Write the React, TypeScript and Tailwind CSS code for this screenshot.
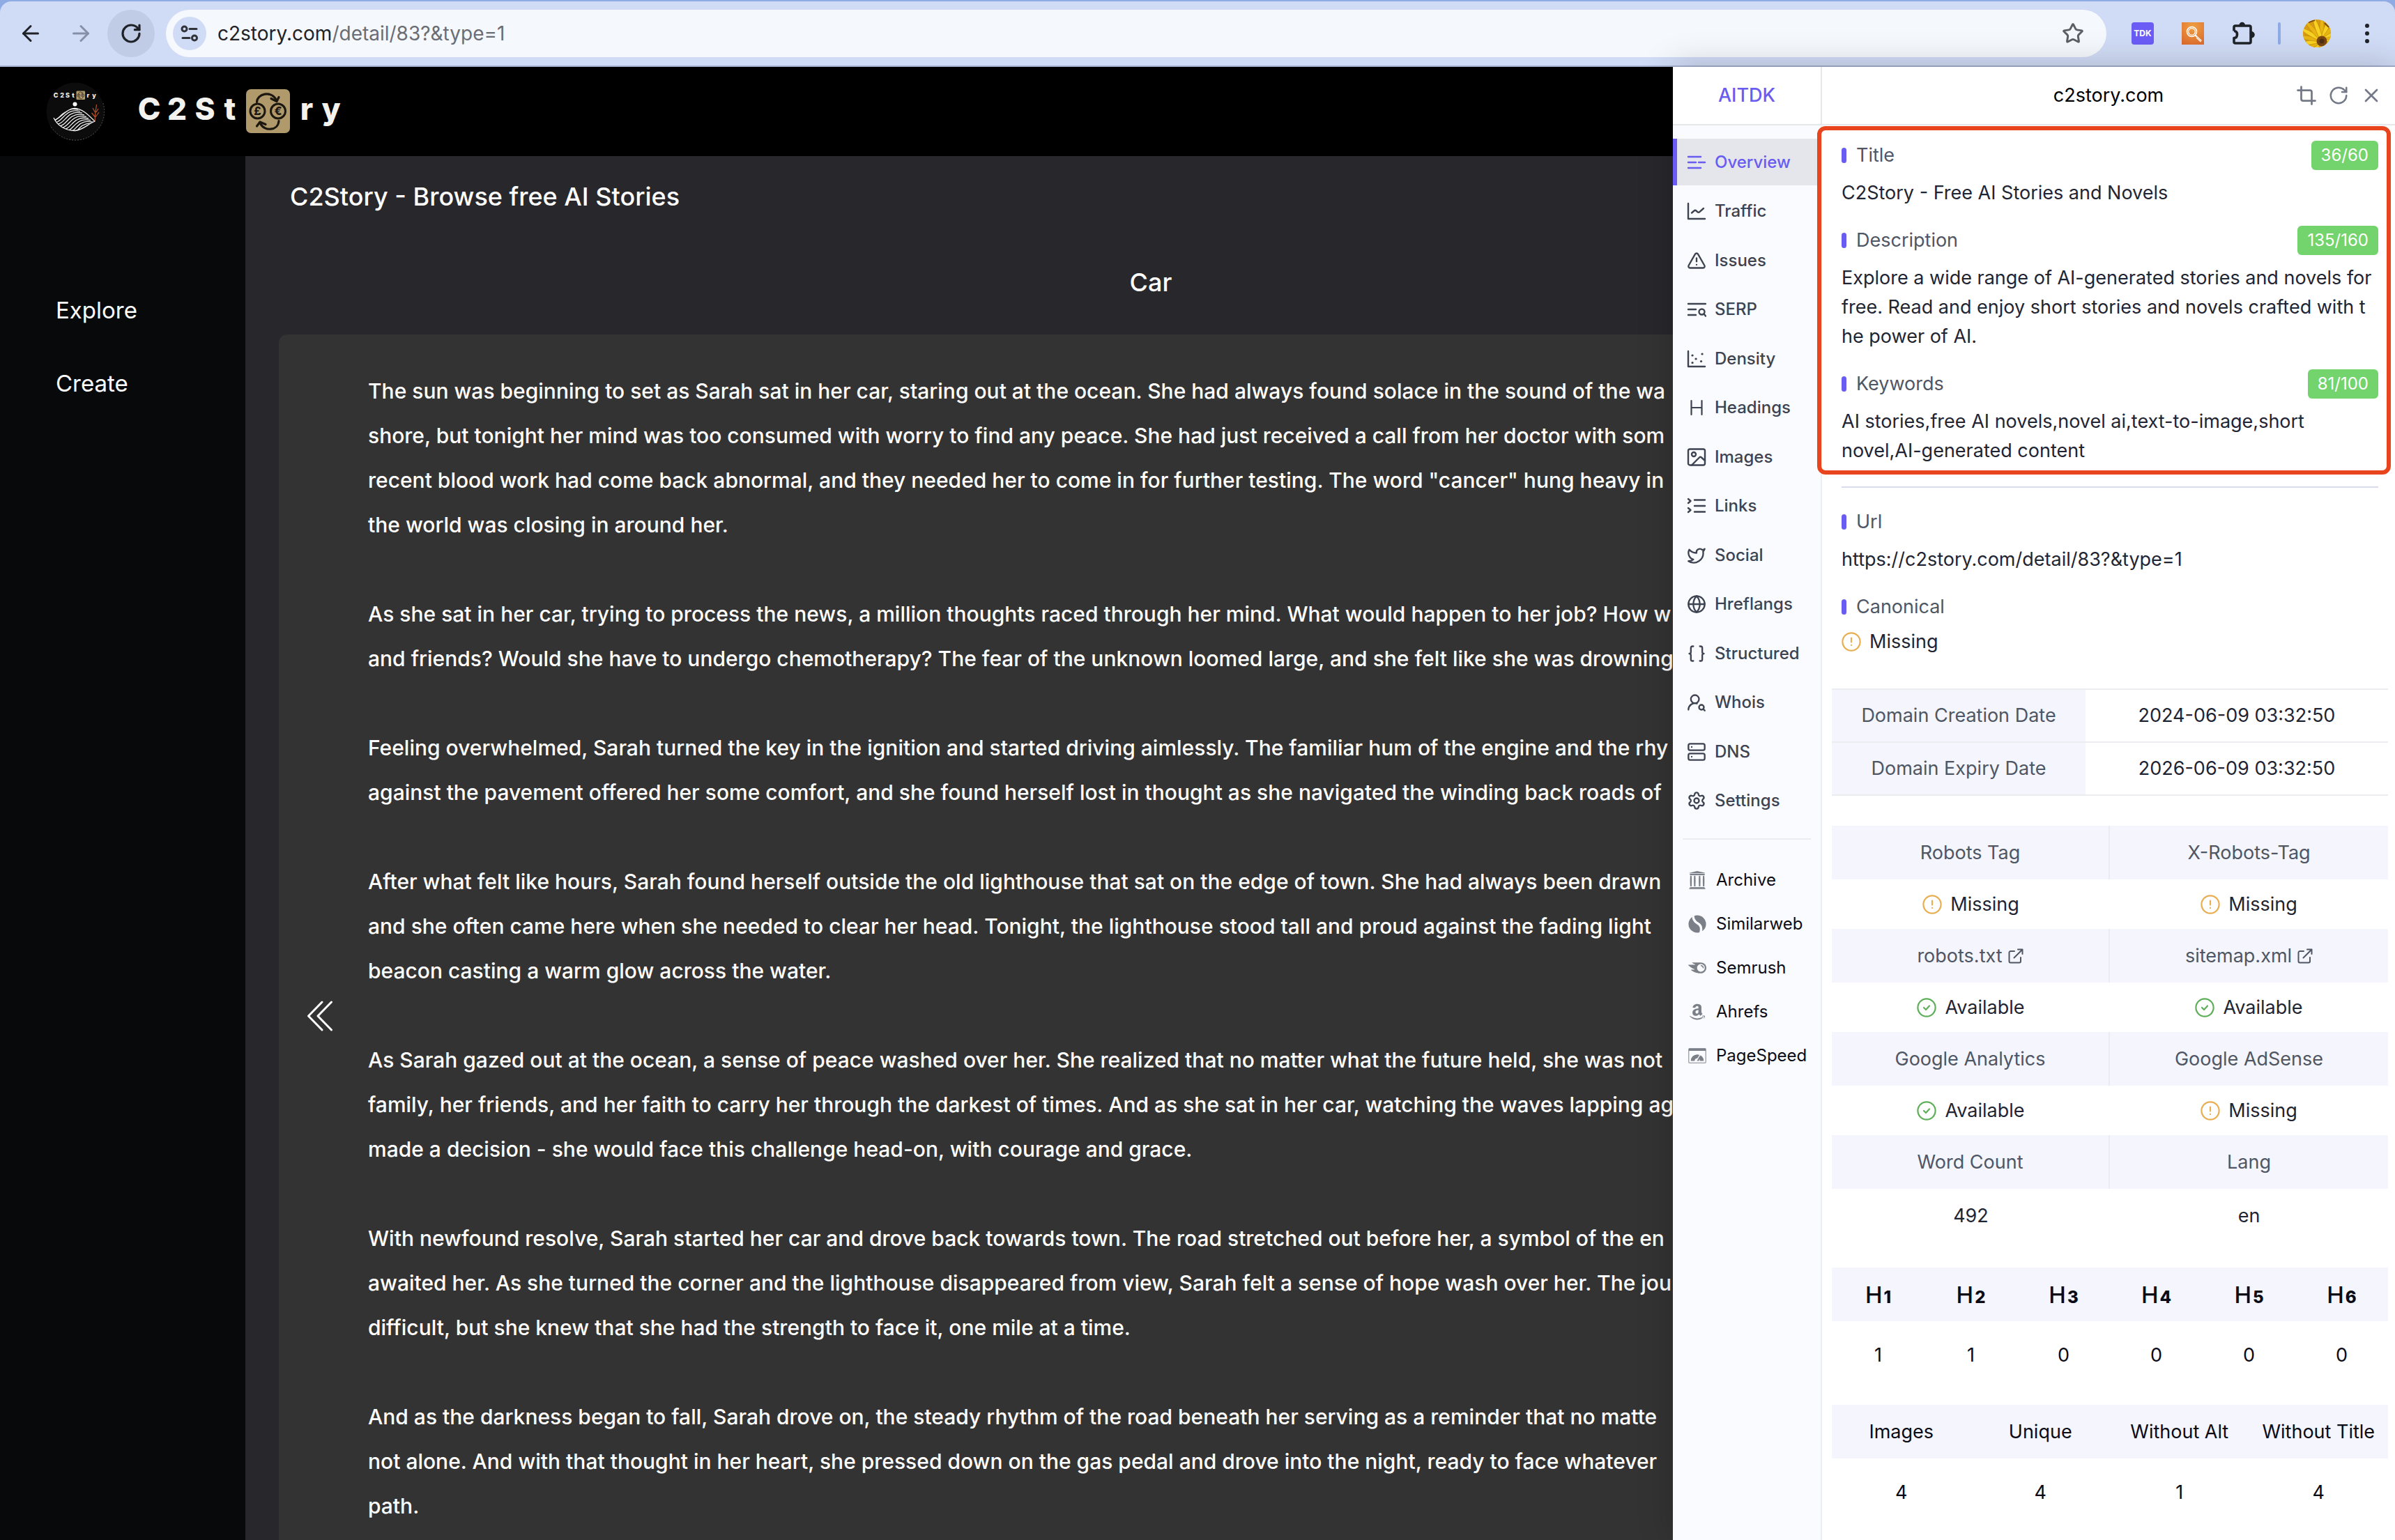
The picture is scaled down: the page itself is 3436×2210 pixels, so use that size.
import React from "react";
import {
  ArrowLeft,
  ArrowRight,
  Braces,
  Crop,
  Globe,
  RotateCw,
  Server,
  Settings,
  Star,
  TriangleAlert,
  Twitter,
  UserRoundSearch,
  X,
} from "lucide-react";
import { FaAmazon } from "react-icons/fa";
import { SiInternetarchive, SiSemrush } from "react-icons/si";

type Kids = { children: React.ReactNode };

/* ---------- icons ---------- */

function LineIcon({ children }: Kids) {
  return (
    <svg viewBox="0 0 28 28" className="size-7" fill="none" stroke="currentColor" strokeWidth="2.4" strokeLinecap="round" strokeLinejoin="round" aria-hidden="true">
      {children}
    </svg>
  );
}

const OverviewIcon = () => (
  <LineIcon>
    <path d="M2 6h18M2 14h11M17 14h9M2 22h18" />
  </LineIcon>
);
const TrafficIcon = () => (
  <LineIcon>
    <path d="M2 3v22h24" />
    <path d="M7 16.5l3.5-3c1-.9 2-.9 3 0l1.8 1.6c1 .9 2 .9 3 0L24 10" />
  </LineIcon>
);
const SerpIcon = () => (
  <LineIcon>
    <path d="M2 6h25M2 14h11M2 22h11" />
    <circle cx="21.5" cy="17.5" r="4" />
    <path d="M24.5 20.5L27 23.5" />
  </LineIcon>
);
const DensityIcon = () => (
  <LineIcon>
    <path d="M2 3v22h24" />
    <path d="M8 9h.1M13 14h.1M8 19.500h.1M20.500 17.500h.1M22 7h.1" strokeWidth="3.2" />
  </LineIcon>
);
const HeadingsIcon = () => (
  <LineIcon>
    <path d="M6.500 4v20M21.500 4v20M6.500 14h15" strokeWidth="2.2" />
  </LineIcon>
);
const ImagesIcon = () => (
  <LineIcon>
    <rect x="2" y="2.500" width="24" height="23" rx="2.500" />
    <circle cx="10" cy="10" r="3" />
    <path d="M7 25.500L18 14.500c1-1 2-1 3 0l5 4.500" />
  </LineIcon>
);
const LinksIcon = () => (
  <LineIcon>
    <path d="M11 5.500h15M11 14h15M11 22.500h15" />
    <path d="M2 4l3.500 3L2 10M2 17l3.500 3L2 23" />
  </LineIcon>
);
const SimilarwebIcon = () => (
  <svg viewBox="0 0 28 28" className="size-6.5" aria-hidden="true">
    <circle cx="14" cy="14" r="13.500" fill="#7b8088" />
    <path d="M7.500 -1C7 7 10 10.500 14.500 13S22 20 18.500 29" fill="none" stroke="#fafbff" strokeWidth="3.600" />
  </svg>
);
const PageSpeedIcon = () => (
  <svg viewBox="0 0 28 28" className="size-6.5" fill="none" aria-hidden="true">
    <rect x=".8" y="2.800" width="26.400" height="22.400" rx="1.500" stroke="#9a9ea6" strokeWidth="1.400" />
    <path d="M1 3h26v3.500H1z" fill="#7b8088" />
    <path d="M4 22a10 10 0 0 1 20 0h-6a4 4 0 0 0-8 0z" fill="#7b8088" />
    <path d="M12.500 22L18.500 12.500" stroke="#fafbff" strokeWidth="1.600" />
    <path d="M13.500 22L18.500 13.500 16.500 22z" fill="#7b8088" />
  </svg>
);
const WarnIcon = () => (
  <svg viewBox="0 0 28 28" className="size-7 text-[#e7ae52]" fill="none" stroke="currentColor" strokeWidth="2.200" strokeLinecap="round" aria-hidden="true">
    <circle cx="14" cy="14" r="12.600" />
    <path d="M14 8.500v6M14 18.800v.1" />
  </svg>
);
const OkIcon = () => (
  <svg viewBox="0 0 28 28" className="size-7 text-[#5fae5a]" fill="none" stroke="currentColor" strokeWidth="2.200" strokeLinecap="round" strokeLinejoin="round" aria-hidden="true">
    <circle cx="14" cy="14" r="12.600" />
    <path d="M10 14l3 3 5-5.500" />
  </svg>
);
const ExternalIcon = () => (
  <svg viewBox="0 0 22 22" className="size-[22px]" fill="none" stroke="currentColor" strokeWidth="2" strokeLinecap="round" strokeLinejoin="round" aria-hidden="true">
    <path d="M9 4H3.500A2 2 0 0 0 1.500 6v12.500a2 2 0 0 0 2 2H16a2 2 0 0 0 2-2V13" />
    <path d="M14 1.500h6.500V8M20.500 1.500L8.500 13.500" />
  </svg>
);
const TuneIcon = () => (
  <svg viewBox="0 0 26 26" className="size-[26px]" fill="none" stroke="#30343a" strokeWidth="3" aria-hidden="true">
    <circle cx="5.500" cy="6.500" r="3.500" />
    <path d="M13 6.500h10M3 19.500h10" strokeLinecap="round" />
    <circle cx="20" cy="19.500" r="3.500" />
  </svg>
);
const PuzzleIcon = () => (
  <svg viewBox="0 0 34 34" className="size-[34px]" fill="none" stroke="#1f2328" strokeWidth="3.600" strokeLinejoin="round" aria-hidden="true">
    <path d="M3 13V8a2 2 0 0 1 2-2h20a2 2 0 0 1 2 2v21a2 2 0 0 1-2 2H5a2 2 0 0 1-2-2v-5c3.500-.3 5-2.600 5-5.500S6.500 13.300 3 13z" stroke="none" />
    <path d="M3 13.500V8a2 2 0 0 1 2-2h20a2 2 0 0 1 2 2v21a2 2 0 0 1-2 2H5a2 2 0 0 1-2-2v-5.500c3 0 4.500-2 4.500-5s-1.500-5-4.500-5" />
    <path d="M10.500 5a4.200 4.200 0 0 1 8.400 0zM28 14a4.800 4.800 0 0 1 0 9.600z" fill="#1f2328" stroke="none" />
  </svg>
);
const PETALS = Array.from({ length: 18 }, (_, i) => i * 20);
const Avatar = () => (
  <svg viewBox="0 0 40 40" className="size-10" aria-hidden="true">
    <defs>
      <clipPath id="avatar-clip">
        <circle cx="20" cy="20" r="20" />
      </clipPath>
    </defs>
    <g clipPath="url(#avatar-clip)">
      <rect width="40" height="40" fill="#d79c12" />
      {PETALS.map((a) => (
        <ellipse key={a} cx="27" cy="13" rx="3" ry="18" fill={a % 40 ? "#f8d222" : "#e9b512"} stroke="#b98309" strokeWidth=".5" transform={`rotate(${a} 27 30)`} />
      ))}
      <path d="M8 4l9-3M31 5l6 6" stroke="#7b4a12" strokeWidth="2" />
      <circle cx="27" cy="31" r="7.500" fill="#7a4613" />
      <circle cx="27" cy="31" r="3.500" fill="#4f2f14" />
    </g>
  </svg>
);
const SearchExtIcon = () => (
  <svg viewBox="0 0 32 32" className="size-8" aria-hidden="true">
    <defs>
      <radialGradient id="search-bg" cx=".5" cy=".2" r=".9">
        <stop offset="0" stopColor="#efa043" />
        <stop offset="1" stopColor="#dc6a2c" />
      </radialGradient>
    </defs>
    <rect width="32" height="32" fill="url(#search-bg)" />
    <g fill="none" stroke="#fff">
      <circle cx="14.500" cy="13.500" r="7" strokeWidth="1.600" />
      <circle cx="14.500" cy="13.500" r="4.800" strokeWidth="1.200" />
      <path d="M19.500 18.500l2.500 2.500" strokeWidth="2" />
      <path d="M22 20.500l6.500 6M21 22l6.500 6" strokeWidth="1.300" />
    </g>
  </svg>
);

const Coins = () => (
  <g>
    <rect width="63" height="63" rx="7" fill="#b09a6c" />
    <g fill="none" stroke="#1c1810" strokeWidth="3">
      <circle cx="16.500" cy="31.500" r="10.500" />
      <circle cx="46" cy="31.500" r="10.500" />
      <path d="M15.500 18.500C16 6 36 2 43 15" strokeWidth="3.200" strokeLinecap="round" />
      <path d="M36 13.500l8 4 3-6" strokeWidth="3.200" strokeLinecap="round" strokeLinejoin="round" />
      <path d="M47 45.500C46 60 26 61 20.500 49" strokeWidth="3.200" strokeLinecap="round" />
      <path d="M15.500 53l4.500-6 8 3.500" strokeWidth="3.200" strokeLinecap="round" strokeLinejoin="round" />
    </g>
    <g fill="#1c1810" fontFamily="Inter, sans-serif" fontWeight="800" fontSize="16" textAnchor="middle">
      <text x="16.500" y="37">£</text>
      <text x="46" y="37">€</text>
    </g>
  </g>
);

const WORDMARK: [string, number][] = [
  ["C", 16],
  ["2", 56],
  ["S", 96],
  ["t", 132],
  ["r", 242],
  ["y", 277],
];
const Wordmark = () => (
  <svg viewBox="0 0 296 64" className="h-16 w-[296px]" role="img" aria-label="C2Story">
    <g fill="#f3f2ee" fontFamily="Inter, sans-serif" fontWeight="800" fontSize="44" textAnchor="middle">
      {WORDMARK.map(([c, x]) => (
        <text key={c} x={x} y="44">
          {c}
        </text>
      ))}
    </g>
    <g transform="translate(155 0)">
      <Coins />
    </g>
  </svg>
);

const BADGE_LETTERS: [string, number][] = [
  ["C", 14],
  ["2", 23],
  ["S", 31],
  ["t", 39],
  ["r", 60.5],
  ["y", 69],
];
const RIDGES = [0, 1, 2, 3, 4, 5, 6, 7, 8, 9];
const Emblem = () => (
  <svg viewBox="0 0 84 84" className="size-[84px]" aria-hidden="true">
    <defs>
      <clipPath id="hill">
        <path d="M11 51C16 62 28 70 42 69.500C54 68 60 60 70 56C60 46 52 38 41 37.500C30 38 22 48 11 51z" />
      </clipPath>
    </defs>
    <circle cx="42" cy="42" r="41.500" fill="#0c0c0c" />
    <path d="M82 30A41.500 41.500 0 0 1 6 62" fill="none" stroke="#6b6b6b" strokeWidth=".8" strokeDasharray="2 2" />
    <g fill="#f3f2ee" fontFamily="Inter, sans-serif" fontWeight="800" fontSize="9" textAnchor="middle">
      {BADGE_LETTERS.map(([c, x]) => (
        <text key={c} x={x} y="21.500">
          {c}
        </text>
      ))}
    </g>
    <g transform="translate(43.500 12.500) scale(.2)">
      <Coins />
    </g>
    <circle cx="41.500" cy="31.500" r="3" fill="#fff" />
    <g clipPath="url(#hill)" fill="none" stroke="#f0f0f0" strokeWidth="1.300">
      {RIDGES.map((i) => (
        <path key={i} d={`M${2 + i * 3} ${56 + i * 2.6}c12 1 16-5 22-11s12-8 22-6`} />
      ))}
    </g>
    <path d="M11 51C16 62 28 70 42 69.500C54 68 60 60 70 56C60 46 52 38 41 37.500C30 38 24 49 13 54" fill="none" stroke="#f0f0f0" strokeWidth="1.300" />
    <g fill="none" stroke="#b5532b" strokeWidth="1.200">
      <path d="M70.500 56c-1-8 1-14 2-24M70.500 50l-5-6M71 44l-4-7M71 50l5-7M72 43l3-5" />
    </g>
  </svg>
);

/* ---------- data ---------- */

const NAV: [string, React.ReactNode][] = [
  ["Overview", <OverviewIcon />],
  ["Traffic", <TrafficIcon />],
  ["Issues", <TriangleAlert className="size-7" strokeWidth={2} />],
  ["SERP", <SerpIcon />],
  ["Density", <DensityIcon />],
  ["Headings", <HeadingsIcon />],
  ["Images", <ImagesIcon />],
  ["Links", <LinksIcon />],
  ["Social", <Twitter className="size-7" strokeWidth={2} />],
  ["Hreflangs", <Globe className="size-7" strokeWidth={2} />],
  ["Structured", <Braces className="size-7" strokeWidth={2} />],
  ["Whois", <UserRoundSearch className="size-7" strokeWidth={2} />],
  ["DNS", <Server className="size-7" strokeWidth={2} />],
  ["Settings", <Settings className="size-7" strokeWidth={2} />],
];

const TOOLS: [string, React.ReactNode][] = [
  ["Archive", <SiInternetarchive className="size-6.5" />],
  ["Similarweb", <SimilarwebIcon />],
  ["Semrush", <SiSemrush className="size-6.5" />],
  ["Ahrefs", <FaAmazon className="size-6.5" />],
  ["PageSpeed", <PageSpeedIcon />],
];

const STORY: string[][] = [
  [
    "The sun was beginning to set as Sarah sat in her car, staring out at the ocean. She had always found solace in the sound of the wa",
    "shore, but tonight her mind was too consumed with worry to find any peace. She had just received a call from her doctor with som",
    "recent blood work had come back abnormal, and they needed her to come in for further testing. The word \"cancer\" hung heavy in",
    "the world was closing in around her.",
  ],
  [
    "As she sat in her car, trying to process the news, a million thoughts raced through her mind. What would happen to her job? How w",
    "and friends? Would she have to undergo chemotherapy? The fear of the unknown loomed large, and she felt like she was drowning",
  ],
  [
    "Feeling overwhelmed, Sarah turned the key in the ignition and started driving aimlessly. The familiar hum of the engine and the rhy",
    "against the pavement offered her some comfort, and she found herself lost in thought as she navigated the winding back roads of",
  ],
  [
    "After what felt like hours, Sarah found herself outside the old lighthouse that sat on the edge of town. She had always been drawn",
    "and she often came here when she needed to clear her head. Tonight, the lighthouse stood tall and proud against the fading light",
    "beacon casting a warm glow across the water.",
  ],
  [
    "As Sarah gazed out at the ocean, a sense of peace washed over her. She realized that no matter what the future held, she was not",
    "family, her friends, and her faith to carry her through the darkest of times. And as she sat in her car, watching the waves lapping ag",
    "made a decision - she would face this challenge head-on, with courage and grace.",
  ],
  [
    "With newfound resolve, Sarah started her car and drove back towards town. The road stretched out before her, a symbol of the en",
    "awaited her. As she turned the corner and the lighthouse disappeared from view, Sarah felt a sense of hope wash over her. The jou",
    "difficult, but she knew that she had the strength to face it, one mile at a time.",
  ],
  [
    "And as the darkness began to fall, Sarah drove on, the steady rhythm of the road beneath her serving as a reminder that no matte",
    "not alone. And with that thought in her heart, she pressed down on the gas pedal and drove into the night, ready to face whatever",
    "path.",
  ],
];

/* ---------- panel pieces ---------- */

function Field({ label, count, children }: Kids & { label: string; count?: string }) {
  return (
    <section>
      <div className="flex h-[42px] items-center justify-between">
        <h3 className="flex items-center gap-3.5 text-[#4f5664]">
          <span className="h-5.5 w-[7px] rounded-full bg-[#6a5cf0]" />
          {label}
        </h3>
        {count && <span className="flex h-[42px] items-center rounded-md bg-[#73d46d] px-3.5 text-2xl text-white">{count}</span>}
      </div>
      {children}
    </section>
  );
}

function Status({ ok }: { ok: boolean }) {
  return (
    <span className="inline-flex items-center gap-3 align-middle leading-[42px]">
      {ok ? <OkIcon /> : <WarnIcon />}
      {ok ? "Available" : "Missing"}
    </span>
  );
}

function DocLink({ children }: Kids) {
  return (
    <a href="#" className="inline-flex items-center gap-2 align-middle">
      {children}
      <ExternalIcon />
    </a>
  );
}

const CHECKS: [React.ReactNode, React.ReactNode, React.ReactNode, React.ReactNode][] = [
  ["Robots Tag", "X-Robots-Tag", <Status ok={false} />, <Status ok={false} />],
  [<DocLink>robots.txt</DocLink>, <DocLink>sitemap.xml</DocLink>, <Status ok />, <Status ok />],
  ["Google Analytics", "Google AdSense", <Status ok />, <Status ok={false} />],
  ["Word Count", "Lang", "492", "en"],
];

function Chrome() {
  return (
    <div className="shrink-0 bg-[#8fabe4] pt-0.5">
      <div className="flex h-[94px] items-center rounded-t-2xl border-b-2 border-[#a3afcd] bg-[#d0dbf5] pr-5 pl-2.5 text-[#1f2328]">
        <div className="flex items-center gap-1">
          <button aria-label="Back" className="flex size-[68px] items-center justify-center rounded-full">
            <ArrowLeft className="size-9" strokeWidth={2} />
          </button>
          <button aria-label="Forward" className="flex size-[68px] items-center justify-center rounded-full text-[#8590a8]">
            <ArrowRight className="size-9" strokeWidth={2} />
          </button>
          <button aria-label="Reload" className="flex size-[68px] items-center justify-center rounded-full bg-[#c0cbe5]">
            <RotateCw className="size-8" strokeWidth={2.4} />
          </button>
        </div>
        <div className="ml-4 flex h-[68px] flex-1 items-center rounded-full bg-[#f5f8fd] pr-8 pl-2.5">
          <button aria-label="Site information" className="flex size-12 items-center justify-center rounded-full bg-[#d0dbf5]">
            <TuneIcon />
          </button>
          <div role="textbox" aria-label="Address" contentEditable suppressContentEditableWarning className="ml-4 flex-1 text-[28px] text-[#6a6e74] outline-none">
            <span className="text-[#1f2328]">c2story.com</span>/detail/83?&amp;type=1
          </div>
          <button aria-label="Bookmark" className="text-[#5b5f66]">
            <Star className="size-8" strokeWidth={2.2} strokeLinejoin="miter" />
          </button>
        </div>
        <div className="ml-9 flex items-center">
          <button className="size-8 rounded-sm bg-[#6a5cf5] text-xs font-bold text-white">TDK</button>
          <button aria-label="Search extension" className="ml-10">
            <SearchExtIcon />
          </button>
          <button aria-label="Extensions" className="ml-10">
            <PuzzleIcon />
          </button>
          <span className="ml-8 h-8 w-1 rounded-full bg-[#8fabe6]" />
          <button aria-label="Profile" className="ml-8">
            <Avatar />
          </button>
          <button aria-label="Menu" className="ml-8 flex w-10 flex-col items-center gap-[5px]">
            <span className="size-1.5 rounded-full bg-[#1f2328]" />
            <span className="size-1.5 rounded-full bg-[#1f2328]" />
            <span className="size-1.5 rounded-full bg-[#1f2328]" />
          </button>
        </div>
      </div>
    </div>
  );
}

function Site() {
  return (
    <div className="flex h-full flex-col bg-[#28272c] text-white">
      <header className="flex h-32 shrink-0 items-center gap-12 bg-black pl-[66px]">
        <Emblem />
        <Wordmark />
      </header>
      <div className="flex min-h-0 flex-1">
        <nav className="flex w-[352px] shrink-0 flex-col gap-[57px] bg-[#08090b] pt-[197px] pl-20 text-[33px] leading-[48px]">
          <a href="#">Explore</a>
          <a href="#">Create</a>
        </nav>
        <main className="min-w-0 flex-1 overflow-hidden pl-12">
          <h1 className="pt-[34px] pl-4 text-4xl leading-[48px] font-medium">C2Story - Browse free AI Stories</h1>
          <h2 className="mt-[75px] w-[2502px] text-center text-4xl leading-[48px] font-medium">Car</h2>
          <div className="relative mt-[51px] w-[2960px] rounded-xl bg-[#333333]">
            <article className="flex flex-col gap-16 pt-[49px] pb-12 pl-32 text-[30px] leading-16 font-medium whitespace-nowrap">
              {STORY.map((lines) => (
                <p key={lines[0]}>
                  {lines.map((l) => (
                    <span key={l} className="block">
                      {l}
                    </span>
                  ))}
                </p>
              ))}
            </article>
            <button aria-label="Previous page" className="absolute top-[956px] left-10">
              <svg viewBox="0 0 38 44" className="h-11 w-[38px]" fill="none" stroke="currentColor" strokeWidth="3" strokeLinecap="round" strokeLinejoin="round">
                <path d="M22 2L2.500 22L22 42M35.500 2L16 22L35.500 42" />
              </svg>
            </button>
          </div>
        </main>
      </div>
    </div>
  );
}

function PanelNav() {
  return (
    <nav className="flex w-[214px] shrink-0 flex-col border-r-2 border-[#eceef6] bg-[#fafbff] text-2xl text-[#3d4351]">
      <ul className="mt-[19px] flex h-[984px] flex-col justify-between">
        {NAV.map(([label, icon], i) => (
          <li key={label}>
            <a
              href="#"
              className={
                i === 0
                  ? "flex h-[67px] items-center gap-3 border-l-6 border-[#6a5cf5] bg-[#e5e6ec] pl-[14px] font-medium text-[#6a5cf0]"
                  : "flex h-[67px] items-center gap-3 border-l-6 border-transparent pl-[14px] font-medium"
              }
            >
              {icon}
              {label}
            </a>
          </li>
        ))}
      </ul>
      <hr className="mx-3.5 mt-5 border-t-2 border-[#ebecf1]" />
      <ul className="mt-[26px] text-[#0b0b16]">
        {TOOLS.map(([label, icon]) => (
          <li key={label}>
            <a href="#" className="flex h-[63px] items-center gap-3.5 pl-[22px]">
              <span className="text-[#7b8088]">{icon}</span>
              {label}
            </a>
          </li>
        ))}
      </ul>
    </nav>
  );
}

function Panel() {
  return (
    <aside className="absolute inset-y-0 right-0 flex w-[1036px] flex-col overflow-hidden bg-white text-[27px] text-[#1f2533] shadow-[0_0_48px_rgba(0,0,0,0.2)]">
      <div className="flex h-21 shrink-0 border-b-2 border-[#e5e7eb]">
        <div className="flex w-[214px] items-center justify-center border-r-2 border-[#e5e7eb] font-medium text-[#6a5cf0]">AITDK</div>
        <div className="grid flex-1 grid-cols-[1fr_auto_1fr] items-center px-[18px]">
          <span />
          <span className="text-black">c2story.com</span>
          <div className="flex justify-end gap-4 text-[#737986]">
            <button aria-label="Capture area">
              <Crop className="size-[30px]" strokeWidth={2.2} />
            </button>
            <button aria-label="Refresh">
              <RotateCw className="size-[30px]" strokeWidth={2} />
            </button>
            <button aria-label="Close">
              <X className="size-8" strokeWidth={2} />
            </button>
          </div>
        </div>
      </div>
      <div className="flex min-h-0 flex-1">
        <PanelNav />
        <div className="relative min-w-0 flex-1 overflow-hidden pt-[22px]">
          <div className="pr-6 pl-7 leading-[42px]">
            <div className="flex flex-col gap-[26px]">
              <Field label="Title" count="36/60">
                <p className="mt-3">C2Story - Free AI Stories and Novels</p>
              </Field>
              <Field label="Description" count="135/160">
                <p className="mt-3 whitespace-nowrap">
                  Explore a wide range of AI-generated stories and novels for
                  <br />
                  free. Read and enjoy short stories and novels crafted with t
                  <br />
                  he power of AI.
                </p>
              </Field>
              <Field label="Keywords" count="81/100">
                <p className="mt-3">
                  AI stories,free AI novels,novel ai,text-to-image,short
                  <br />
                  novel,AI-generated content
                </p>
              </Field>
            </div>
            <hr className="mt-[30px] mb-7 border-t-2 border-[#d9dcef]" />
            <div className="flex flex-col gap-[26px]">
              <Field label="Url">
                <p className="mt-3">https://c2story.com/detail/83?&amp;type=1</p>
              </Field>
              <Field label="Canonical">
                <div className="mt-2 flex">
                  <Status ok={false} />
                </div>
              </Field>
            </div>
          </div>
          <div className="mt-[46px] mr-2.5 ml-3.5 text-center leading-10">
            <table className="w-full table-fixed border-collapse">
              <tbody>
                <tr className="h-19 border-y-2 border-[#ebecf0]">
                  <th scope="row" className="w-[364px] bg-[#f4f5fd] font-normal text-[#4f5664]">
                    Domain Creation Date
                  </th>
                  <td>2024-06-09 03:32:50</td>
                </tr>
                <tr className="h-19 border-y-2 border-[#ebecf0]">
                  <th scope="row" className="bg-[#f4f5fd] font-normal text-[#4f5664]">
                    Domain Expiry Date
                  </th>
                  <td>2026-06-09 03:32:50</td>
                </tr>
              </tbody>
            </table>
            <table className="mt-[43px] w-full table-fixed border-separate border-spacing-0">
              <tbody>
                {CHECKS.map(([a, b, c, d], i) => (
                  <React.Fragment key={i}>
                    <tr className="h-[77px] bg-[#f4f5fd] text-[#4f5664]">
                      <th className="border-r-2 border-[#ebecf2] p-0 font-normal">{a}</th>
                      <th className="p-0 font-normal">{b}</th>
                    </tr>
                    <tr className={i === 3 ? "h-[77px]" : "h-[71px]"}>
                      <td className="p-0">{c}</td>
                      <td className="p-0">{d}</td>
                    </tr>
                  </React.Fragment>
                ))}
              </tbody>
            </table>
            <table className="mt-9 w-full table-fixed text-[#0b0b16]">
              <thead>
                <tr className="h-[77px] bg-[#f4f5fd]">
                  {[1, 2, 3, 4, 5, 6].map((n) => (
                    <th key={n} scope="col" className="text-[33px] font-medium">
                      H<span className="ml-0.5 text-2xl font-extrabold">{n}</span>
                    </th>
                  ))}
                </tr>
              </thead>
              <tbody>
                <tr className="h-[98px]">
                  {[1, 1, 0, 0, 0, 0].map((v, i) => (
                    <td key={i}>{v}</td>
                  ))}
                </tr>
              </tbody>
            </table>
            <table className="mt-[22px] w-full table-fixed text-[#0b0b16]">
              <thead>
                <tr className="h-[77px] bg-[#f4f5fd]">
                  {["Images", "Unique", "Without Alt", "Without Title"].map((h) => (
                    <th key={h} scope="col" className="p-0 font-normal whitespace-nowrap">
                      {h}
                    </th>
                  ))}
                </tr>
              </thead>
              <tbody>
                <tr className="h-[98px]">
                  {[4, 4, 1, 4].map((v, i) => (
                    <td key={i}>{v}</td>
                  ))}
                </tr>
              </tbody>
            </table>
          </div>
        </div>
      </div>
      <div className="pointer-events-none absolute top-[85px] right-1.5 left-[207px] h-[500px] rounded-xl border-6 border-[#e8451f]" />
    </aside>
  );
}

export default function App() {
  return (
    <div className="flex h-screen flex-col overflow-hidden bg-[#28272c] font-[Inter,sans-serif]">
      <Chrome />
      <div className="relative min-h-0 flex-1">
        <Site />
        <Panel />
      </div>
    </div>
  );
}
